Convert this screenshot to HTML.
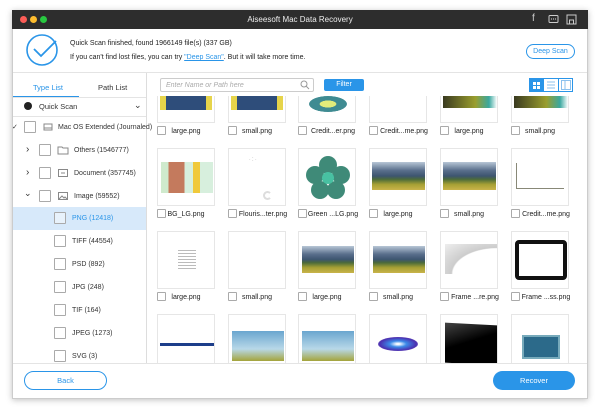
<!DOCTYPE html>
<html><head><meta charset="utf-8"><style>
*{box-sizing:border-box;margin:0;padding:0}
html,body{width:600px;height:413px;overflow:hidden}
body{background:#fff;font-family:"Liberation Sans",sans-serif;position:relative;color:#333}
.a{position:absolute}
.win{left:12px;top:10px;width:576px;height:389px;background:#fff;box-shadow:0 1px 6px rgba(0,0,0,.25);border:1px solid #ccc}
.cb{position:absolute;width:12px;height:12px;border:1px solid #aaa;background:#fff;border-radius:1px}
.cell{position:absolute;width:58px;height:58px;border:1px solid #e6e6e6;background:#fff;overflow:hidden}
.lbl{position:absolute;font-size:7px;color:#222;width:70px;text-align:center;white-space:nowrap}
.side{font-size:7px;color:#333;position:absolute;white-space:nowrap}
.land{position:absolute;background:linear-gradient(#b7c6d6 0,#5a6f8c 30%,#3d5570 50%,#4c6b3a 62%,#a6a034 80%,#c9b44a 100%)}
</style></head><body>
<div class="a win"></div>
<div class="a" style="left:12px;top:10px;width:576px;height:19px;background:#2d2d2d"></div>
<div class="a" style="left:20px;top:16px;width:7px;height:7px;border-radius:50%;background:#fc5d57"></div>
<div class="a" style="left:30px;top:16px;width:7px;height:7px;border-radius:50%;background:#fdbc2e"></div>
<div class="a" style="left:40px;top:16px;width:7px;height:7px;border-radius:50%;background:#28c840"></div>
<div class="a" style="left:12px;top:15px;width:576px;text-align:center;color:#eee;font-size:8px">Aiseesoft Mac Data Recovery</div>
<div class="a" style="left:532px;top:13px;color:#ccc;font-size:10px">f</div>
<svg class="a" style="left:548px;top:14px" width="11" height="11"><rect x="1" y="1.5" width="9" height="7" rx="1" fill="none" stroke="#ccc"/><circle cx="3.5" cy="5" r=".6" fill="#ccc"/><circle cx="5.5" cy="5" r=".6" fill="#ccc"/><circle cx="7.5" cy="5" r=".6" fill="#ccc"/></svg>
<svg class="a" style="left:566px;top:14px" width="11" height="11"><rect x="1" y="1" width="9" height="9" fill="none" stroke="#ccc"/><rect x="3.5" y="6" width="4" height="4" fill="none" stroke="#ccc"/></svg>
<svg class="a" style="left:25px;top:33px" width="34" height="34"><circle cx="17" cy="17" r="15" fill="none" stroke="#2a95e8" stroke-width="1.6"/><path d="M9 16 L16 23 L31 8" fill="none" stroke="#2a95e8" stroke-width="1.8"/></svg>
<div class="a" style="left:70px;top:40px;font-size:7px;color:#222">Quick Scan finished, found 1966149 file(s) (337 GB)</div>
<div class="a" style="left:70px;top:54px;font-size:7px;color:#222">If you can't find lost files, you can try <span style="color:#2a95e8;text-decoration:underline">"Deep Scan"</span>. But it will take more time.</div>
<div class="a" style="left:526px;top:44px;width:49px;height:15px;border:1px solid #2a95e8;border-radius:8px;color:#2a95e8;font-size:7px;text-align:center;line-height:13px">Deep Scan</div>
<div class="a" style="left:13px;top:72px;width:574px;height:1px;background:#e4e4e4"></div>
<div class="a" style="left:146px;top:73px;width:1px;height:290px;background:#ddd"></div>
<div class="a" style="left:33px;top:83px;font-size:7.5px;color:#2a95e8">Type List</div>
<div class="a" style="left:98px;top:83px;font-size:7.5px;color:#333">Path List</div>
<div class="a" style="left:13px;top:96px;width:66px;height:1.5px;background:#2a95e8"></div>
<div class="a" style="left:13px;top:97px;width:133px;height:1px;background:#e4e4e4"></div>
<div class="a" style="left:24px;top:102px;width:8px;height:8px;border-radius:50%;background:#222"></div>
<div class="side" style="left:39px;top:102px;font-size:7.5px">Quick Scan</div>
<div class="side" style="left:134px;top:100px;font-size:9px">⌄</div>
<div class="a" style="left:13px;top:116px;width:133px;height:1px;background:#e4e4e4"></div>
<div class="side" style="left:12px;top:123px">✓</div>
<div class="cb" style="left:24px;top:121px"></div>
<svg class="a" style="left:42px;top:122px" width="12" height="10"><path d="M2 2h8v6H2z M2 6h8" fill="none" stroke="#888"/></svg>
<div class="side" style="left:58px;top:124px">Mac OS Extended (Journaled)</div>
<div class="side" style="left:26px;top:144px;font-size:10px">›</div>
<div class="cb" style="left:39px;top:144px"></div>
<svg class="a" style="left:57px;top:145px" width="12" height="10"><path d="M1 2h4l1 1h5v6H1z" fill="none" stroke="#888"/></svg>
<div class="side" style="left:74px;top:147px">Others (1546777)</div>
<div class="side" style="left:26px;top:167px;font-size:10px">›</div>
<div class="cb" style="left:39px;top:167px"></div>
<svg class="a" style="left:57px;top:168px" width="12" height="10"><rect x="1.5" y="1.5" width="9" height="7" fill="none" stroke="#888"/><path d="M4 5h4" stroke="#888"/></svg>
<div class="side" style="left:74px;top:170px">Document (357745)</div>
<div class="side" style="left:24px;top:188px;font-size:9px">⌄</div>
<div class="cb" style="left:39px;top:190px"></div>
<svg class="a" style="left:57px;top:191px" width="12" height="10"><rect x="1.5" y="1.5" width="9" height="7" fill="none" stroke="#888"/><path d="M2 8l3-3 2 2 1-1 2 2" fill="none" stroke="#888"/></svg>
<div class="side" style="left:74px;top:193px">Image (59552)</div>
<div class="a" style="left:13px;top:207px;width:133px;height:23px;background:#d7e9fa"></div>
<div class="cb" style="left:54px;top:212px;background:#e8f2fb"></div>
<div class="side" style="left:72px;top:215px;color:#2a95e8">PNG (12418)</div>
<div class="cb" style="left:54px;top:235px"></div><div class="side" style="left:72px;top:238px">TIFF (44554)</div>
<div class="cb" style="left:54px;top:258px"></div><div class="side" style="left:72px;top:261px">PSD (892)</div>
<div class="cb" style="left:54px;top:281px"></div><div class="side" style="left:72px;top:284px">JPG (248)</div>
<div class="cb" style="left:54px;top:304px"></div><div class="side" style="left:72px;top:307px">TIF (164)</div>
<div class="cb" style="left:54px;top:327px"></div><div class="side" style="left:72px;top:330px">JPEG (1273)</div>
<div class="cb" style="left:54px;top:350px"></div><div class="side" style="left:72px;top:353px">SVG (3)</div>
<div class="a" style="left:160px;top:78px;width:154px;height:14px;border:1px solid #ccc;border-radius:2px;font-size:7px;color:#aaa;font-style:italic;padding:3px 0 0 5px">Enter Name or Path here</div>
<svg class="a" style="left:300px;top:80px" width="10" height="10"><circle cx="4" cy="4" r="3" fill="none" stroke="#999"/><path d="M6 6l3 3" stroke="#999"/></svg>
<div class="a" style="left:324px;top:79px;width:40px;height:12px;background:#2a95e8;border-radius:2px;color:#fff;font-size:7px;text-align:center;line-height:12px">Filter</div>
<div class="a" style="left:529px;top:78px;width:44px;height:14px;border:1px solid #2a95e8"></div>
<div class="a" style="left:529px;top:78px;width:15px;height:14px;background:#2a95e8"></div>
<svg class="a" style="left:533px;top:82px" width="8" height="8"><rect x="0" y="0" width="3" height="3" fill="#fff"/><rect x="4" y="0" width="3" height="3" fill="#fff"/><rect x="0" y="4" width="3" height="3" fill="#fff"/><rect x="4" y="4" width="3" height="3" fill="#fff"/></svg>
<div class="a" style="left:558px;top:78px;width:1px;height:14px;background:#2a95e8"></div>
<svg class="a" style="left:547px;top:81px" width="8" height="8"><path d="M0 1h8M0 4h8M0 7h8" stroke="#8bc1ee"/></svg>
<svg class="a" style="left:561px;top:80px" width="10" height="10"><rect x=".5" y=".5" width="9" height="9" fill="none" stroke="#8bc1ee"/><path d="M4 0v10" stroke="#8bc1ee"/></svg>
<div class="a" style="left:147px;top:96px;width:440px;height:267px;overflow:hidden">
 <div class="a" style="left:-147px;top:-96px;width:600px;height:470px">
  <div class="cell" style="left:157px;top:65px"><div class="land" style="left:2px;top:30px;width:52px;height:14px;background:linear-gradient(90deg,#e6d44a 0 12%,#2e4d7a 12%,#2e4d7a 88%,#e6d44a 88%)"></div></div>
  <div class="cell" style="left:228px;top:65px"><div class="land" style="left:2px;top:30px;width:52px;height:14px;background:linear-gradient(90deg,#e6d44a 0 12%,#2e4d7a 12%,#2e4d7a 88%,#e6d44a 88%)"></div></div>
  <div class="cell" style="left:298px;top:65px"><div class="a" style="left:10px;top:30px;width:38px;height:16px;border-radius:50%;background:radial-gradient(#e2ec7a 30%,#3f8b92 32%,#3f8b92 70%,#fff 72%)"></div></div>
  <div class="cell" style="left:369px;top:65px"></div>
  <div class="cell" style="left:440px;top:65px"><div class="a" style="left:2px;top:30px;width:54px;height:12px;background:linear-gradient(90deg,#3a3a20,#9a9e2e 60%,#3aa89f 85%,#fff)"></div></div>
  <div class="cell" style="left:511px;top:65px"><div class="a" style="left:2px;top:30px;width:54px;height:12px;background:linear-gradient(90deg,#3a3a20,#9a9e2e 60%,#3aa89f 85%,#fff)"></div></div>
  <div class="cell" style="left:157px;top:148px"><div class="a" style="left:3px;top:13px;width:52px;height:31px;background:linear-gradient(90deg,#cfeacd 0 14%,#c47a5d 14% 45%,#d7efdd 45% 62%,#f0c93a 62% 75%,#d7efdd 75%)"></div></div>
  <div class="cell" style="left:228px;top:148px"><div class="a" style="left:34px;top:42px;width:9px;height:9px;border-radius:50%;border:2px solid #ddd;border-right-color:transparent"></div><div class="a" style="left:20px;top:8px;font-size:5px;color:#aaa">· ⁚ ·</div></div>
  <div class="cell" style="left:298px;top:148px"><svg width="58" height="58"><g fill="#3f8a78"><circle cx="29" cy="16" r="9"/><circle cx="16" cy="26" r="9"/><circle cx="42" cy="26" r="9"/><circle cx="21" cy="41" r="9"/><circle cx="37" cy="41" r="9"/></g><circle cx="29" cy="29" r="6" fill="#48c1a2"/></svg></div>
  <div class="cell" style="left:369px;top:148px"><div class="land" style="left:2px;top:13px;width:53px;height:28px"></div></div>
  <div class="cell" style="left:440px;top:148px"><div class="land" style="left:2px;top:13px;width:53px;height:28px"></div></div>
  <div class="cell" style="left:511px;top:148px"><div class="a" style="left:4px;top:14px;width:48px;height:26px;border-left:1px solid #887;border-bottom:1px solid #887"></div></div>
  <div class="cell" style="left:157px;top:231px"><div class="a" style="left:20px;top:16px;width:18px;height:22px;background:repeating-linear-gradient(#fff 0 2px,#bbb 2px 3px)"></div></div>
  <div class="cell" style="left:228px;top:231px"></div>
  <div class="cell" style="left:298px;top:231px"><div class="land" style="left:3px;top:14px;width:52px;height:27px"></div></div>
  <div class="cell" style="left:369px;top:231px"><div class="land" style="left:3px;top:14px;width:52px;height:27px"></div></div>
  <div class="cell" style="left:440px;top:231px"><div class="a" style="left:4px;top:12px;width:52px;height:30px;background:radial-gradient(ellipse at 100% 100%,#fff 60%,#ccc 62%,#eee 100%)"></div></div>
  <div class="cell" style="left:511px;top:231px"><div class="a" style="left:3px;top:8px;width:52px;height:40px;border:4px solid #111;border-radius:4px"></div></div>
  <div class="cell" style="left:157px;top:314px"><div class="a" style="left:2px;top:28px;width:54px;height:3px;background:#1d3e8a"></div></div>
  <div class="cell" style="left:228px;top:314px"><div class="a" style="left:3px;top:16px;width:52px;height:30px;background:linear-gradient(#6aa6cf,#b8d8e8 60%,#a4a43a)"></div></div>
  <div class="cell" style="left:298px;top:314px"><div class="a" style="left:3px;top:16px;width:52px;height:30px;background:linear-gradient(#6aa6cf,#b8d8e8 60%,#a4a43a)"></div></div>
  <div class="cell" style="left:369px;top:314px"><div class="a" style="left:8px;top:22px;width:40px;height:14px;border-radius:50%;background:radial-gradient(#fff 5%,#3b8ae8 30%,#4b2fb0 65%,#fff 100%)"></div></div>
  <div class="cell" style="left:440px;top:314px"><div class="a" style="left:4px;top:9px;width:52px;height:40px;background:linear-gradient(160deg,#444,#000 45%);transform:skewY(3deg)"></div></div>
  <div class="cell" style="left:511px;top:314px"><div class="a" style="left:10px;top:20px;width:38px;height:24px;background:#2c6a8a;border:2px solid #7ab"></div></div>
 </div>
</div>
<div class="cb" style="left:157px;top:126px;width:9px;height:9px"></div><div class="lbl" style="left:151px;top:128px">large.png</div>
<div class="cb" style="left:228px;top:126px;width:9px;height:9px"></div><div class="lbl" style="left:222px;top:128px">small.png</div>
<div class="cb" style="left:298px;top:126px;width:9px;height:9px"></div><div class="lbl" style="left:298px;top:128px">Credit...er.png</div>
<div class="cb" style="left:369px;top:126px;width:9px;height:9px"></div><div class="lbl" style="left:369px;top:128px">Credit...me.png</div>
<div class="cb" style="left:440px;top:126px;width:9px;height:9px"></div><div class="lbl" style="left:434px;top:128px">large.png</div>
<div class="cb" style="left:511px;top:126px;width:9px;height:9px"></div><div class="lbl" style="left:505px;top:128px">small.png</div>
<div class="cb" style="left:157px;top:209px;width:9px;height:9px"></div><div class="lbl" style="left:151px;top:211px">BG_LG.png</div>
<div class="cb" style="left:228px;top:209px;width:9px;height:9px"></div><div class="lbl" style="left:228px;top:211px">Flouris...ter.png</div>
<div class="cb" style="left:298px;top:209px;width:9px;height:9px"></div><div class="lbl" style="left:298px;top:211px">Green ...LG.png</div>
<div class="cb" style="left:369px;top:209px;width:9px;height:9px"></div><div class="lbl" style="left:363px;top:211px">large.png</div>
<div class="cb" style="left:440px;top:209px;width:9px;height:9px"></div><div class="lbl" style="left:434px;top:211px">small.png</div>
<div class="cb" style="left:511px;top:209px;width:9px;height:9px"></div><div class="lbl" style="left:511px;top:211px">Credit...me.png</div>
<div class="cb" style="left:157px;top:292px;width:9px;height:9px"></div><div class="lbl" style="left:151px;top:294px">large.png</div>
<div class="cb" style="left:228px;top:292px;width:9px;height:9px"></div><div class="lbl" style="left:222px;top:294px">small.png</div>
<div class="cb" style="left:298px;top:292px;width:9px;height:9px"></div><div class="lbl" style="left:292px;top:294px">large.png</div>
<div class="cb" style="left:369px;top:292px;width:9px;height:9px"></div><div class="lbl" style="left:363px;top:294px">small.png</div>
<div class="cb" style="left:440px;top:292px;width:9px;height:9px"></div><div class="lbl" style="left:440px;top:294px">Frame ...re.png</div>
<div class="cb" style="left:511px;top:292px;width:9px;height:9px"></div><div class="lbl" style="left:511px;top:294px">Frame ...ss.png</div>
<div class="a" style="left:13px;top:363px;width:574px;height:1px;background:#e4e4e4"></div>
<div class="a" style="left:24px;top:371px;width:83px;height:19px;border:1px solid #2a95e8;border-radius:10px;color:#2a95e8;font-size:7.5px;text-align:center;line-height:17px">Back</div>
<div class="a" style="left:493px;top:371px;width:82px;height:19px;background:#2a95e8;border-radius:10px;color:#fff;font-size:7.5px;text-align:center;line-height:19px">Recover</div>
</body></html>
